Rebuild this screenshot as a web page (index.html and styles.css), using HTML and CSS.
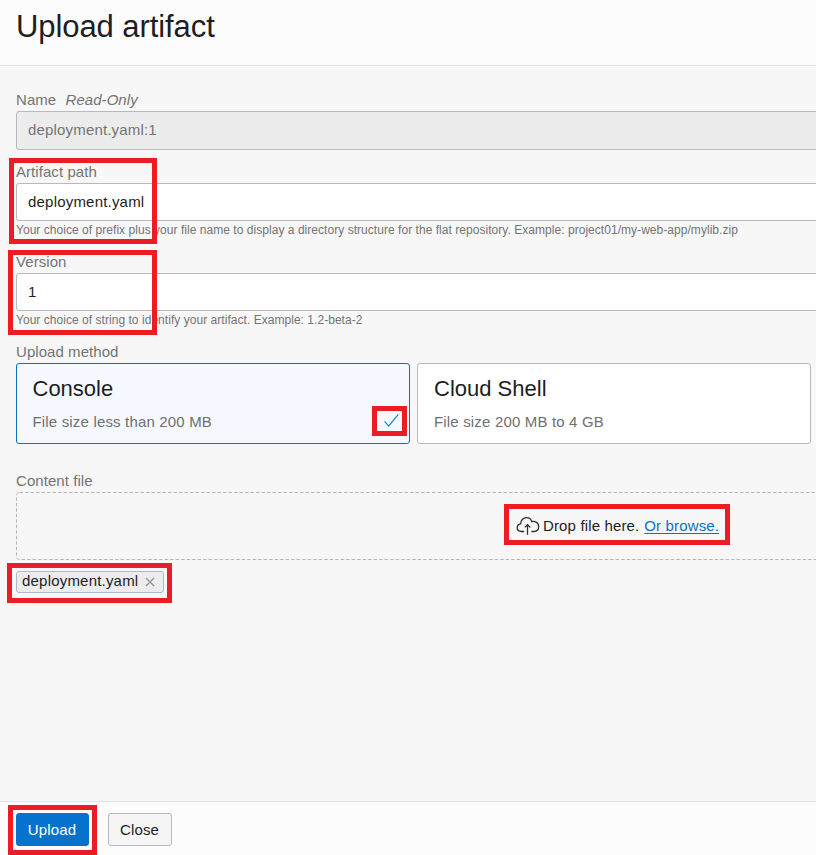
FILE: index.html
```html
<!DOCTYPE html>
<html lang="en">
<head>
<meta charset="utf-8">
<title>Upload artifact</title>
<link rel="stylesheet" href="styles.css">
</head>
<body>
<div class="panel">
  <header class="header"><h1>Upload artifact</h1></header>
  <main class="content">
    <section class="field field-name">
      <div class="label">Name <em>Read-Only</em></div>
      <div class="input readonly">deployment.yaml:1</div>
    </section>
    <section class="field field-path">
      <div class="label">Artifact path</div>
      <div class="input">deployment.yaml</div>
      <div class="help">Your choice of prefix plus your file name to display a directory structure for the flat repository. Example: project01/my-web-app/mylib.zip</div>
      <span class="mark mark-path"></span>
    </section>
    <section class="field field-version">
      <div class="label">Version</div>
      <div class="input">1</div>
      <div class="help">Your choice of string to identify your artifact. Example: 1.2-beta-2</div>
      <span class="mark mark-version"></span>
    </section>
    <section class="field field-method">
      <div class="label">Upload method</div>
      <div class="cards">
        <div class="card selected">
          <h2>Console</h2>
          <p>File size less than 200 MB</p>
          <svg class="check" viewBox="0 0 16 16"><path d="M1 8.3 5.2 13 14.8 1.3"/></svg>
          <span class="mark mark-check"></span>
        </div>
        <div class="card">
          <h2>Cloud Shell</h2>
          <p>File size 200 MB to 4 GB</p>
        </div>
      </div>
    </section>
    <section class="field field-file">
      <div class="label">Content file</div>
      <div class="dropzone">
        <svg class="dash" width="1204" height="68"><rect x=".5" y=".5" width="1203" height="67" rx="3"/></svg>
        <div class="drop">
          <svg class="cloud" viewBox="0 0 24 20"><path d="M8.2 15.5H5.4C3 15.5 1.2 13.9 1.2 11.8c0-2.2 1.4-3.7 3.5-3.9C4.6 4.3 7 1.7 10.4 1.7c2.7 0 4.6 1.4 5.3 3.8 3.8-.8 7 1.5 7 5 0 3-2 5-5 5h-2.3M11.5 18.7V8.6M8.7 11.4l2.8-2.8 2.8 2.8"/></svg>
          <span>Drop file here.</span><a>Or browse.</a>
          <span class="mark mark-drop"></span>
        </div>
      </div>
      <div class="chip">
        <span class="chip-name">deployment.yaml</span>
        <svg viewBox="0 0 10 10"><path d="M1 1l8 8M9 1L1 9"/></svg>
        <i class="mark mark-chip"></i>
      </div>
    </section>
  </main>
  <footer class="footer">
    <div class="button primary">Upload<span class="mark mark-upload"></span></div>
    <div class="button">Close</div>
  </footer>
</div>
</body>
</html>
```
FILE: styles.css
```css
* { box-sizing: border-box; }
html, body { margin: 0; height: 100%; overflow: hidden; }
body {
  font: 15px/20px "Liberation Sans", Arial, sans-serif;
  letter-spacing: .14px;
  color: #1e1e1e;
  background: #f7f7f7;
}
h1, h2, p { margin: 0; font-weight: 400; }
.panel { width: 1236px; height: 855px; display: flex; flex-direction: column; }
.header {
  height: 66px;
  padding: 7px 16px;
  background: #fcfcfc;
  border-bottom: 1px solid #e4e4e4;
}
h1 { font-size: 31px; line-height: 40px; letter-spacing: -.08px; }
.content { flex: 1; padding: 24px 16px 0; }
.field { position: relative; }
.field-name { height: 72px; }
.field-path, .field-version { height: 90px; }
.field-method { height: 129px; }
.label { height: 21px; color: #747474; white-space: pre; letter-spacing: .06px; }
.label em { margin-left: 5px; }
.input {
  height: 38px;
  padding: 0 11px;
  line-height: 36px;
  letter-spacing: .2px;
  background: #fff;
  border: 1px solid #b5b9c3;
  border-radius: 3px;
}
.readonly { height: 39px; background: #ececec; color: #747474; letter-spacing: .17px; }
.help { font-size: 12px; line-height: 18px; letter-spacing: .04px; color: #747474; }
.cards { display: flex; gap: 7px; }
.card {
  position: relative;
  width: 394px;
  height: 81px;
  padding: 12px 16px;
  background: #fff;
  border: 1px solid #b5b9c3;
  border-radius: 3px;
}
.card.selected { padding-left: 15.5px; background: #f5f9ff; border-color: #0572ce; }
.card h2 { font-size: 22px; line-height: 26px; letter-spacing: 0; }
.card p { margin-top: 10px; line-height: 20px; letter-spacing: .17px; color: #6f6f6f; }
.check { position: absolute; right: 9px; bottom: 14px; width: 17px; height: 16px; fill: none; stroke: #2286dc; stroke-width: 1.2; }
.dropzone { position: relative; height: 68px; display: flex; align-items: center; justify-content: center; }
.dash { position: absolute; inset: 0; fill: none; stroke: #b5b7bd; stroke-dasharray: 3.5 2; }
.drop { position: relative; width: 204px; display: flex; align-items: center; white-space: nowrap; }
.cloud { width: 24px; height: 20px; margin-right: 3px; fill: none; stroke: #303030; stroke-width: 1.3; }
.drop a { margin-left: 5px; color: #0572ce; text-decoration: underline; text-underline-offset: 2px; }
.chip {
  position: relative;
  width: 148px;
  height: 22px;
  margin-top: 11px;
  padding: 0 8px 0 5px;
  display: flex;
  align-items: center;
  justify-content: space-between;
  background: #ececec;
  border: 1px solid #b5b9c3;
  border-radius: 3px;
}
.chip-name { padding-bottom: 2px; letter-spacing: .2px; }
.chip svg { width: 10px; height: 10px; fill: none; stroke: #909090; stroke-width: 1.2; }
.footer {
  height: 54px;
  padding: 11px 16px;
  display: flex;
  gap: 19px;
  background: #fcfcfc;
  border-top: 1px solid #e4e4e4;
}
.button {
  position: relative;
  width: 64px;
  height: 33px;
  padding-right: 1px;
  border: 1px solid #b5b9c3;
  border-radius: 3px;
  line-height: 32px;
  text-align: center;
  background: #f5f5f5;
}
.primary { width: 73px; color: #fff; background: #0572ce; border-color: #0572ce; }
.mark { position: absolute; border: 5px solid #ed1c24; }
.mark-path { left: -7px; top: -4px; width: 148px; height: 86px; }
.mark-version { left: -8px; top: -2px; width: 149px; height: 85px; }
.mark-check { right: 2px; bottom: 7px; width: 35px; height: 30px; }
.mark-drop { left: -12px; top: -12px; width: 226px; height: 41px; }
.mark-chip { left: -10px; top: -9px; width: 165px; height: 40px; }
.mark-upload { left: -9px; top: -9px; width: 89px; height: 50px; }
```
